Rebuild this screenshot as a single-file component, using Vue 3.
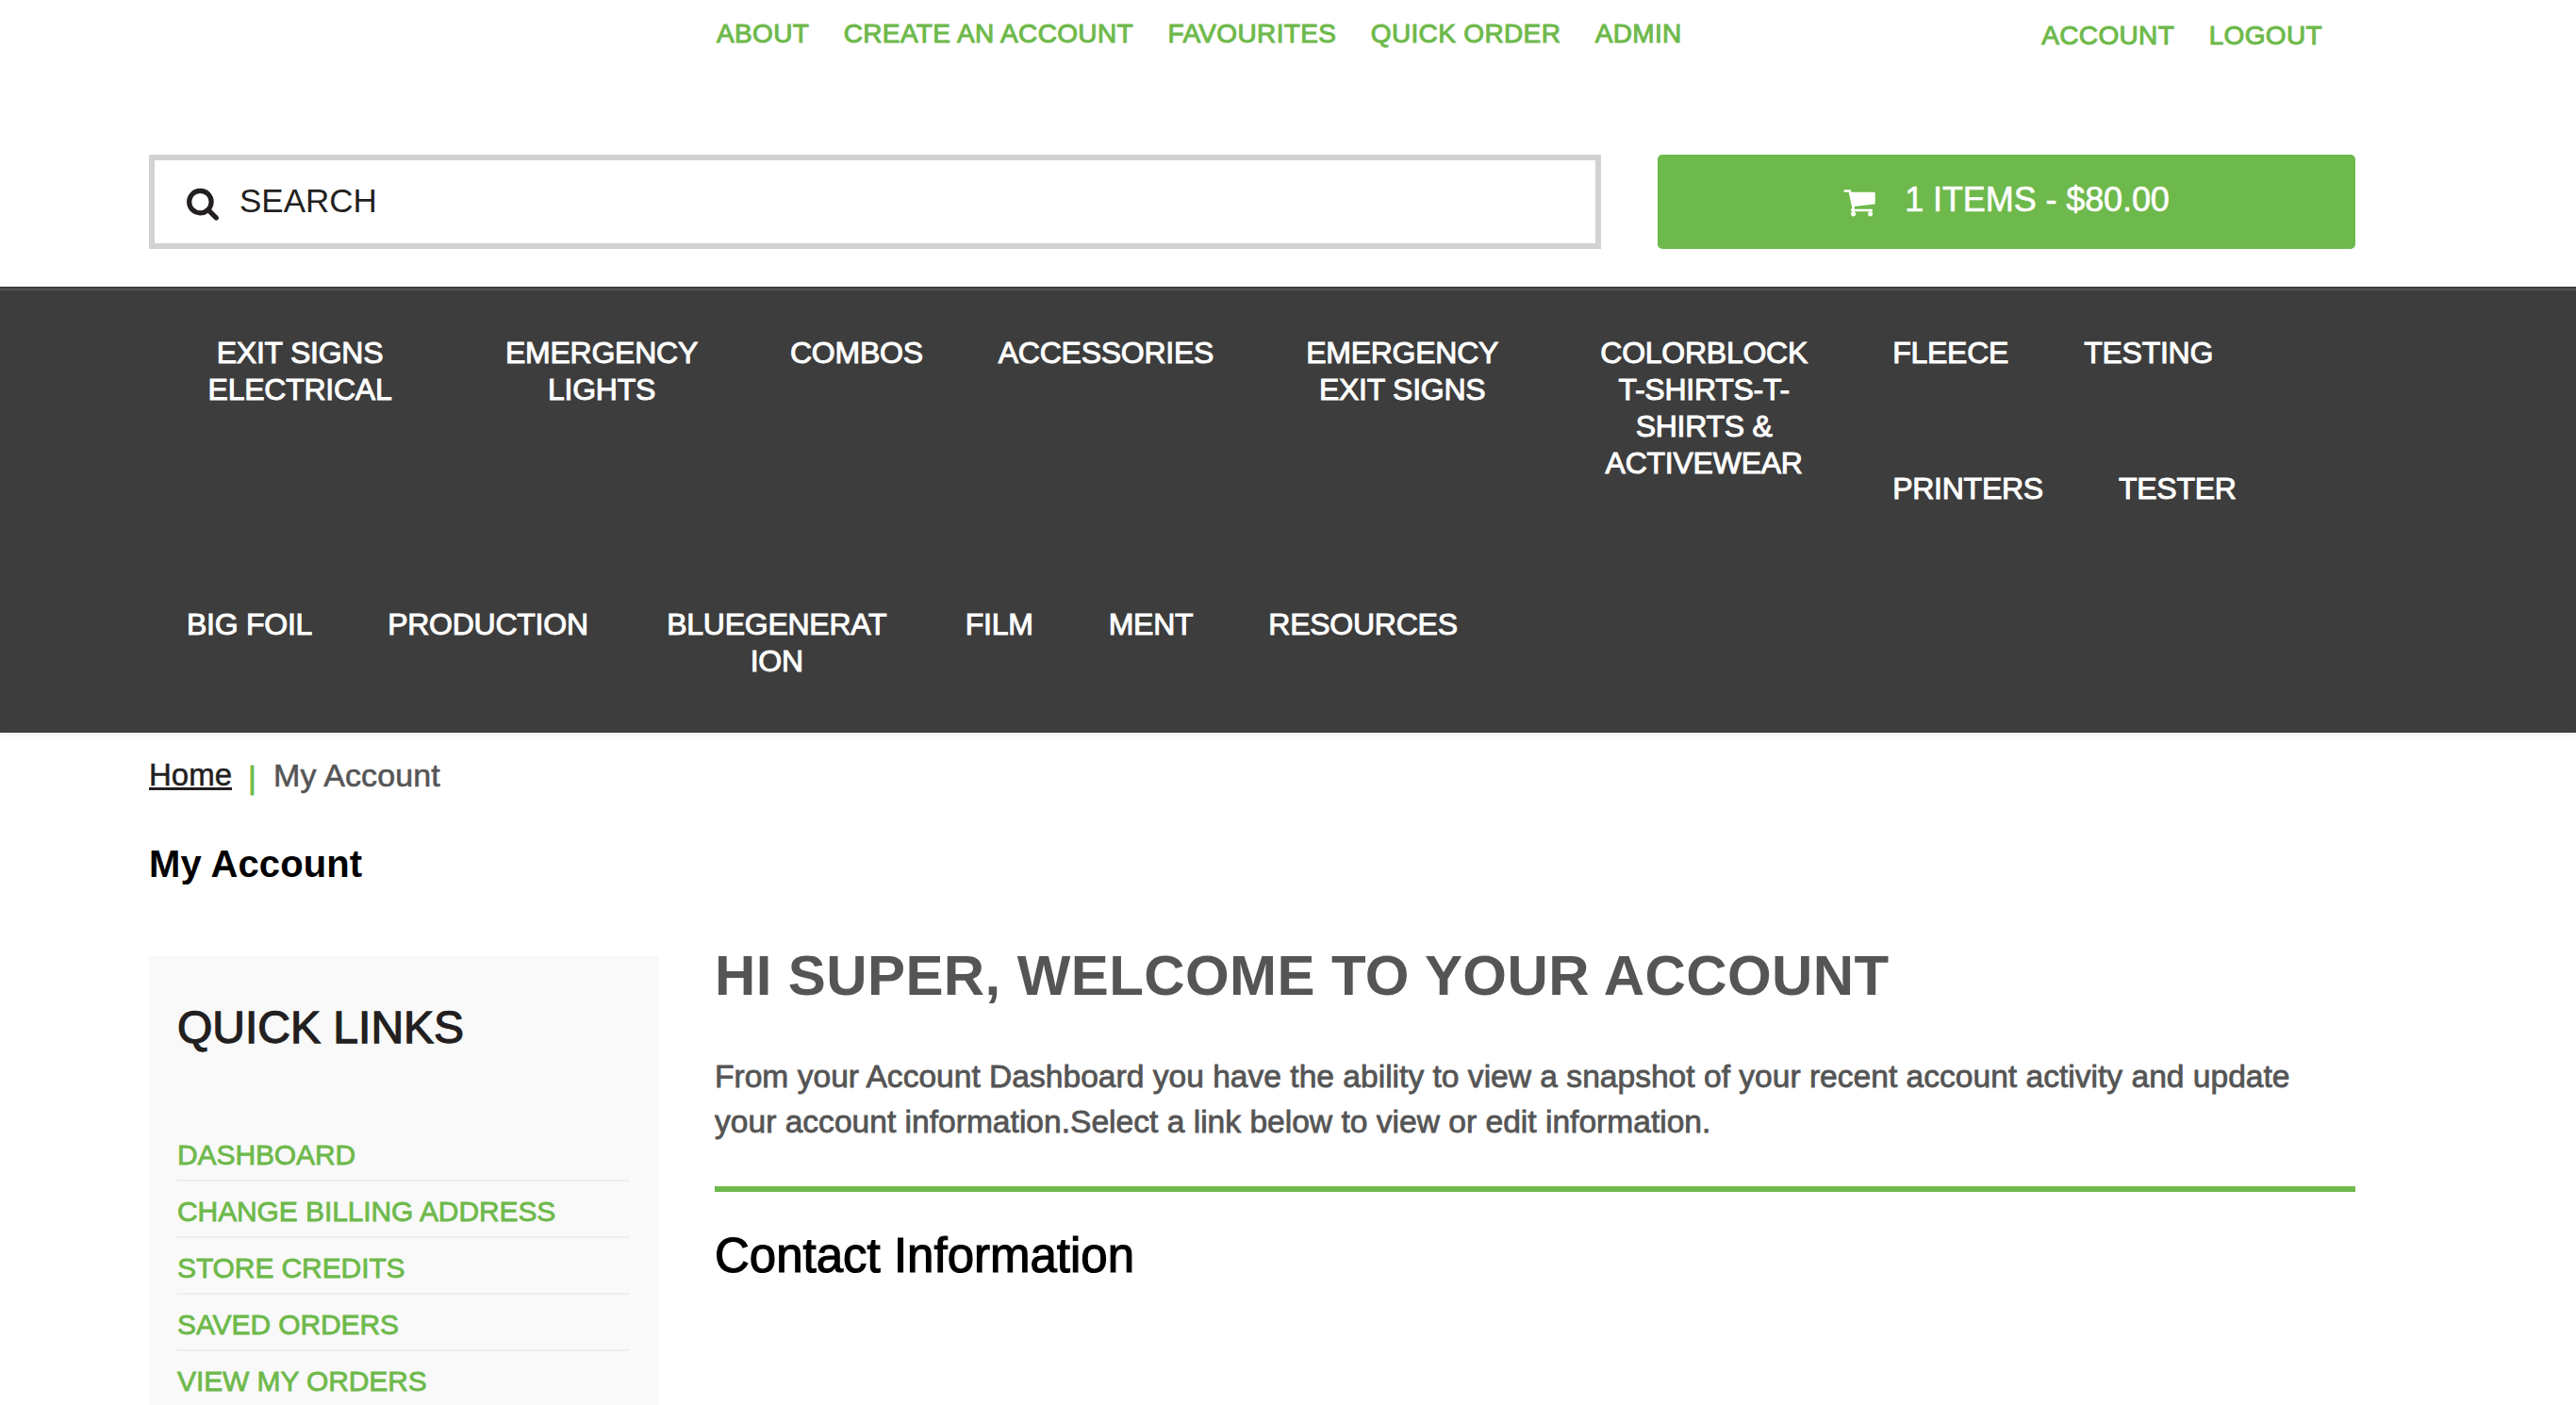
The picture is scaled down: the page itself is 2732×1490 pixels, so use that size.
<template>
  <div class="page">
    <div class="topbar">
      <div class="toplinks">
        <a v-for="link in topLinks" :key="link">{{ link }}</a>
      </div>
      <div class="userlinks">
        <a>ACCOUNT</a>
        <a>LOGOUT</a>
      </div>
    </div>
    <div class="searchrow">
      <div class="search">
        <svg class="search-icon" viewBox="0 0 1664 1792">
          <path d="M1152 704q0-185-131.5-316.5t-316.5-131.5-316.5 131.5-131.5 316.5 131.5 316.5 316.5 131.5 316.5-131.5 131.5-316.5zm512 832q0 52-38 90t-90 38q-54 0-90-38l-343-342q-179 124-399 124-143 0-273.5-55.5t-225-150-150-225-55.5-273.5 55.5-273.5 150-225 225-150 273.5-55.5 273.5 55.5 225 150 150 225 55.5 273.5q0 220-124 399l343 343q37 37 37 90z" />
        </svg>
        <input type="text" placeholder="SEARCH" />
      </div>
      <div class="cart">
        <svg class="cart-icon" viewBox="0 0 1664 1792">
          <path d="M640 1536q0 52-38 90t-90 38-90-38-38-90 38-90 90-38 90 38 38 90zm896 0q0 52-38 90t-90 38-90-38-38-90 38-90 90-38 90 38 38 90zm128-1088v512q0 24-16.5 42.5t-40.5 21.5l-1044 122q13 60 13 70 0 16-24 64h920q26 0 45 19t19 45-19 45-45 19h-1024q-26 0-45-19t-19-45q0-11 8-31.5t16-36 21.5-40 15.5-29.5l-177-823h-204q-26 0-45-19t-19-45 19-45 45-19h256q16 0 28.5 6.5t19.5 15.5 13 24.5 8 26 5.5 29.5 4.5 26h1201q26 0 45 19t19 45z" />
        </svg>
        <span>1 ITEMS - $80.00</span>
      </div>
    </div>
    <nav class="mainnav">
      <div class="navrow">
        <a v-for="item in navFirst" :key="item" class="navitem">{{ item }}</a>
        <div class="navstack">
          <div class="navrow">
            <a class="navitem">FLEECE</a>
            <a class="navitem">TESTING</a>
          </div>
          <div class="navrow">
            <a class="navitem">PRINTERS</a>
            <a class="navitem">TESTER</a>
          </div>
        </div>
      </div>
      <div class="navrow">
        <a v-for="item in navSecond" :key="item" class="navitem">{{ item }}</a>
      </div>
    </nav>
    <div class="content">
      <div class="breadcrumb">
        <a>Home</a>
        <span class="sep">|</span>
        <span>My Account</span>
      </div>
      <h1 class="pagetitle">My Account</h1>
      <div class="columns">
        <aside class="sidebar">
          <h2>QUICK LINKS</h2>
          <ul>
            <li v-for="link in quickLinks" :key="link">{{ link }}</li>
          </ul>
        </aside>
        <section class="main">
          <h2 class="welcome">HI SUPER, WELCOME TO YOUR ACCOUNT</h2>
          <div class="intro">
            <p>
              From your Account Dashboard you have the ability to view a snapshot of your recent account activity and update your account information.Select a link below to view or edit information.
            </p>
          </div>
          <h3 class="contact">Contact Information</h3>
        </section>
      </div>
    </div>
  </div>
</template>

<script setup>
const topLinks = ['ABOUT', 'CREATE AN ACCOUNT', 'FAVOURITES', 'QUICK ORDER', 'ADMIN'];
const navFirst = [
  'EXIT SIGNS ELECTRICAL',
  'EMERGENCY LIGHTS',
  'COMBOS',
  'ACCESSORIES',
  'EMERGENCY EXIT SIGNS',
  'COLORBLOCK T-SHIRTS-T-SHIRTS & ACTIVEWEAR',
];
const navSecond = ['BIG FOIL', 'PRODUCTION', 'BLUEGENERATION', 'FILM', 'MENT', 'RESOURCES'];
const quickLinks = ['DASHBOARD', 'CHANGE BILLING ADDRESS', 'STORE CREDITS', 'SAVED ORDERS', 'VIEW MY ORDERS'];
</script>

<style>
html,
body {
  margin: 0;
  background: #fff;
  overflow: hidden;
}
</style>

<style scoped>
.page {
  width: 2732px;
  height: 1490px;
  overflow: hidden;
  font-family: "Liberation Sans", Arial, sans-serif;
  color: #231f20;
}
.topbar {
  display: flex;
  justify-content: space-between;
  height: 164px;
  padding: 18px 269px 0 760px;
  box-sizing: border-box;
}
.toplinks,
.userlinks {
  display: flex;
  gap: 36.5px;
  font-size: 28px;
  line-height: 36px;
  color: #6eb94b;
  -webkit-text-stroke: 1px #6eb94b;
  letter-spacing: 0.35px;
}
.userlinks {
  padding-top: 2px;
}
.searchrow {
  display: flex;
  justify-content: space-between;
  padding: 0 234px 40px 158px;
}
.search {
  width: 1540px;
  height: 100px;
  box-sizing: border-box;
  border: 6px solid #d2d2d2;
  display: flex;
  align-items: center;
  padding-left: 34px;
}
.search-icon {
  width: 34px;
  height: 38px;
  fill: #231f20;
  margin-top: 8px;
  flex: none;
}
.search input {
  border: none;
  outline: none;
  flex: 1;
  margin-left: 22px;
  padding: 0;
  font-family: inherit;
  font-size: 35px;
  color: #231f20;
  background: transparent;
  margin-top: -2px;
}
.search input::placeholder {
  color: #231f20;
  opacity: 1;
}
.cart {
  width: 740px;
  height: 100px;
  background: #6eb94b;
  border-radius: 5px;
  color: #fff;
  display: flex;
  align-items: center;
  justify-content: center;
  gap: 31px;
  font-size: 36px;
}
.cart span {
  padding-bottom: 4px;
  -webkit-text-stroke: 0.6px #fff;
  letter-spacing: -0.1px;
}
.cart-icon {
  width: 34px;
  height: 36px;
  fill: #fff;
  flex: none;
}
.mainnav {
  background: #3d3d3d;
  border-top: 2px solid #3d3d3d;
  height: 473px;
  box-sizing: border-box;
  box-shadow: inset 0 2px 0 #535353, 0 2px 8px rgba(0, 0, 0, 0.08);
  padding-left: 158px;
}
.navrow {
  display: flex;
  align-items: flex-start;
}
.navitem {
  flex: none;
  max-width: 240px;
  margin: 0 40px;
  padding: 49px 0 56px;
  text-align: center;
  color: #fff;
  font-size: 32px;
  line-height: 39px;
  letter-spacing: -0.25px;
  -webkit-text-stroke: 1px #fff;
  overflow-wrap: break-word;
}
.navstack .navitem {
  height: 144px;
  box-sizing: border-box;
}
.content {
  padding: 0 234px 0 158px;
}
.breadcrumb {
  padding-top: 21px;
  font-size: 34px;
  line-height: 44px;
  letter-spacing: 0.1px;
  color: #555;
  display: flex;
  align-items: center;
  -webkit-text-stroke: 0.6px #555;
}
.breadcrumb a {
  color: #231f20;
  font-size: 33px;
  letter-spacing: 0;
  text-decoration: underline;
  -webkit-text-stroke: 0.5px #231f20;
}
.sep {
  color: #6eb94b;
  -webkit-text-stroke: 0.8px #6eb94b;
  margin: 4px 18px 0 17px;
}
.pagetitle {
  margin: 45px 0 0;
  font-size: 40px;
  line-height: 50px;
  letter-spacing: 0.1px;
  color: #000;
}
.columns {
  display: flex;
  gap: 60px;
  margin-top: 73px;
}
.sidebar {
  flex: none;
  width: 540px;
  height: 700px;
  box-sizing: border-box;
  background: #f9f9f9;
  padding: 46px 30px 0;
}
.sidebar h2 {
  margin: 0;
  font-size: 48px;
  line-height: 60px;
  font-weight: 400;
  -webkit-text-stroke: 1.3px #231f20;
}
.sidebar ul {
  list-style: none;
  margin: 73px 0 0;
  padding: 0;
}
.sidebar li {
  height: 60px;
  box-sizing: border-box;
  padding-top: 6px;
  border-bottom: 2px solid #eee;
  font-size: 30px;
  line-height: 52px;
  letter-spacing: -0.1px;
  color: #6eb94b;
  -webkit-text-stroke: 0.8px #6eb94b;
}
.main {
  flex: 1;
  min-width: 0;
}
.welcome {
  margin: -14px 0 0;
  font-size: 60px;
  line-height: 70px;
  letter-spacing: 0.4px;
  color: #555;
}
.intro {
  margin-top: 48px;
  padding-bottom: 44px;
  border-bottom: 6px solid #6eb94b;
}
.intro p {
  margin: 0;
  max-width: 1720px;
  font-size: 33.6px;
  line-height: 48px;
  color: #555;
  -webkit-text-stroke: 0.8px #555;
}
.contact {
  margin: 38px 0 0;
  font-size: 51px;
  line-height: 60px;
  font-weight: 400;
  color: #000;
  -webkit-text-stroke: 1.2px #000;
}
</style>
